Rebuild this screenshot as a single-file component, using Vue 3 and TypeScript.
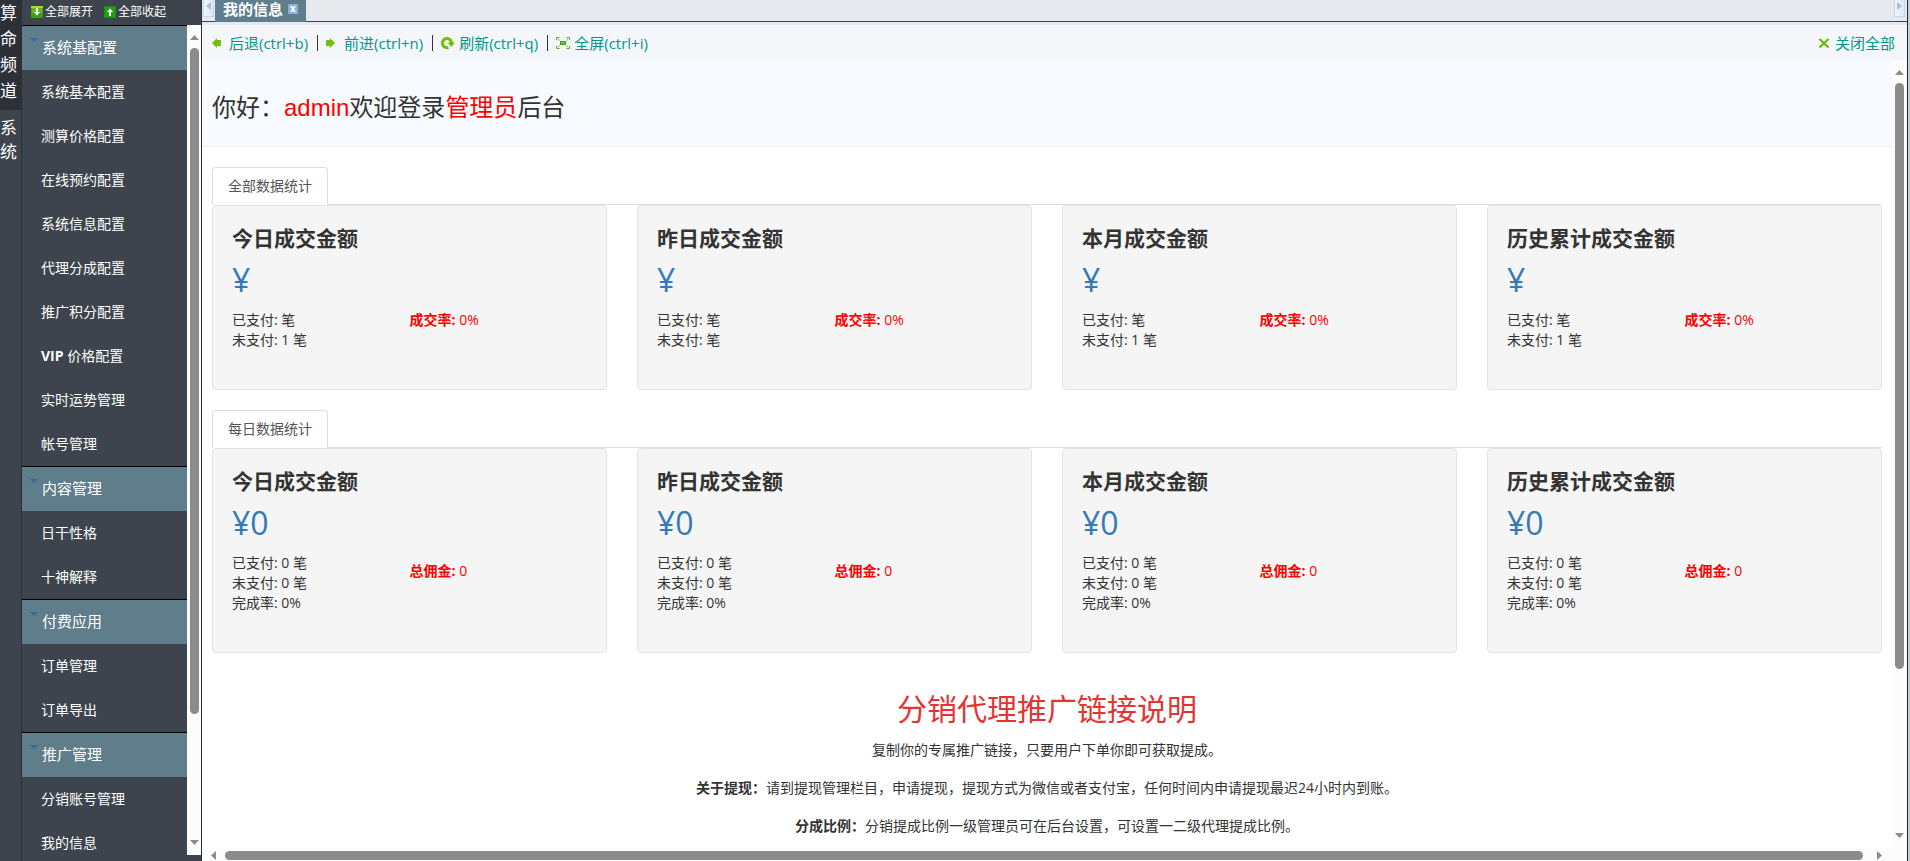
<script setup lang="ts">
import { ref } from 'vue'

interface Group {
  title: string
  items: string[]
  open: boolean
}
interface Stat {
  title: string
  amount: string
  lines: string[]
  label: string
  value: string
}

const channels = [
  { name: '算命频道', active: true },
  { name: '系统', active: false },
]

const groups = ref<Group[]>([
  {
    title: '系统基配置',
    items: ['系统基本配置', '测算价格配置', '在线预约配置', '系统信息配置', '代理分成配置', '推广积分配置', 'VIP 价格配置', '实时运势管理', '帐号管理'],
    open: true,
  },
  { title: '内容管理', items: ['日干性格', '十神解释'], open: true },
  { title: '付费应用', items: ['订单管理', '订单导出'], open: true },
  { title: '推广管理', items: ['分销账号管理', '我的信息'], open: true },
])

function setAll(open: boolean) {
  groups.value.forEach((g) => (g.open = open))
}

const names = ['今日成交金额', '昨日成交金额', '本月成交金额', '历史累计成交金额']
const unpaid = ['1 笔', '笔', '1 笔', '1 笔']

const sections: { tab: string; kind: string; cards: Stat[] }[] = [
  {
    tab: '全部数据统计',
    kind: 'total',
    cards: names.map((title, i) => ({
      title,
      amount: '¥',
      lines: ['已支付: 笔', `未支付: ${unpaid[i]}`],
      label: '成交率:',
      value: '0%',
    })),
  },
  {
    tab: '每日数据统计',
    kind: 'daily',
    cards: names.map((title) => ({
      title,
      amount: '¥0',
      lines: ['已支付: 0 笔', '未支付: 0 笔', '完成率: 0%'],
      label: '总佣金:',
      value: '0',
    })),
  },
]
</script>

<template>
  <div class="app">
    <nav class="rail">
      <a v-for="c in channels" :key="c.name" href="#" class="channel" :class="{ active: c.active }">{{ c.name }}</a>
    </nav>

    <aside class="side">
      <div class="side-tools">
        <button type="button" @click="setAll(true)">
          <svg width="12" height="12" viewBox="0 0 12 12"><rect width="12" height="12" rx="1" fill="#3f9f10" /><rect width="12" height="2" fill="#a4e02a" /><rect x="1" y="2" width="10" height="5" fill="#5cba1a" /><path d="M5 2h2v4h2L6 9.500 3 6h2z" fill="#fff" /></svg>
          全部展开
        </button>
        <button type="button" @click="setAll(false)">
          <svg width="12" height="12" viewBox="0 0 12 12"><rect width="12" height="12" rx="1" fill="#1d8a10" /><rect x="1" y="1" width="10" height="10" fill="#22a012" /><path d="M5 10h2V6h2L6 2.500 3 6h2z" fill="#fff" /></svg>
          全部收起
        </button>
      </div>
      <div class="side-body">
        <div class="menu">
          <section v-for="g in groups" :key="g.title" class="group">
            <button type="button" class="group-head" @click="g.open = !g.open">
              <svg width="8" height="4" viewBox="0 0 8 4"><path d="M0 0h8v1H7L4 4 1 1H0z" fill="#39689c" /></svg>
              <span>{{ g.title }}</span>
            </button>
            <template v-if="g.open">
              <a v-for="it in g.items" :key="it" href="#" class="item">
                <template v-if="it.startsWith('VIP')"><b>VIP</b>{{ it.slice(3) }}</template>
                <template v-else>{{ it }}</template>
              </a>
            </template>
          </section>
        </div>
        <div class="bar bar-v side-bar">
          <svg width="9" height="5" viewBox="0 0 9 5"><path d="M0 5 4.500 0 9 5z" fill="#8b8b8b" /></svg>
          <div class="track"><div class="thumb side-thumb"></div></div>
          <svg width="9" height="5" viewBox="0 0 9 5"><path d="M0 0h9L4.500 5z" fill="#8b8b8b" /></svg>
        </div>
      </div>
    </aside>

    <main class="main">
      <div class="tabs">
        <button type="button" class="scroller" aria-label="向左">
          <svg width="5" height="8" viewBox="0 0 5 8"><path d="M5 0v8L0 4z" fill="#a9bdd8" /></svg>
        </button>
        <div class="tab">
          <span>我的信息</span>
          <button type="button" class="tab-close" aria-label="关闭">
            <svg width="10" height="10" viewBox="0 0 10 10"><rect width="10" height="10" rx="1" fill="#8fb0da" /><path d="M2 2h2l1 1.500L6 2h2L6 5l2 3H6L5 6.500 4 8H2l2-3z" fill="#fff" /></svg>
          </button>
        </div>
        <button type="button" class="scroller last" aria-label="向右">
          <svg width="5" height="8" viewBox="0 0 5 8"><path d="M0 0v8l5-4z" fill="#a9bdd8" /></svg>
        </button>
      </div>

      <div class="toolbar">
        <a href="#">
          <svg width="16" height="16" viewBox="0 0 16 16"><path d="M1 8 6 3v2h4v6H6v2z" fill="#6fbf0c" /></svg>后退(ctrl+b)</a>
        <i></i>
        <a href="#">
          <svg width="16" height="16" viewBox="0 0 16 16"><path d="M9 8 4 3v2H0v6h4v2z" fill="#6fbf0c" /></svg>前进(ctrl+n)</a>
        <i></i>
        <a href="#">
          <svg width="16" height="16" viewBox="0 0 16 16"><path d="M7.500 12.500A4.600 4.600 0 1 1 10.600 8" fill="none" stroke="#6fbf0c" stroke-width="3" /><path d="M6.500 7.500H14L10.200 12z" fill="#6fbf0c" /></svg>刷新(ctrl+q)</a>
        <i></i>
        <a href="#">
          <svg width="16" height="16" viewBox="0 0 16 16"><path d="M.500 5V2.500h3M10.500 2.500h3V5M13.500 11v2.500h-3M3.500 13.500h-3V11" fill="none" stroke="#5cab2a" /><path d="m2 4 1.500 1.500M12 4l-1.500 1.500M2 12l1.500-1.500M12 12l-1.500-1.500" stroke="#8fcf5a" stroke-width="1.200" /><rect x="4.500" y="6.500" width="5" height="3" fill="#5fd22b" stroke="#3f9f10" /></svg>全屏(ctrl+i)</a>
        <a href="#" class="close-all">
          <svg width="16" height="16" viewBox="0 0 16 16"><path d="m2.500 4 9 8.500M11.500 4l-9 8.500" stroke="#6fb80c" stroke-width="2.400" /></svg>关闭全部</a>
      </div>

      <div class="view">
        <div class="view-row">
          <div class="content">
            <h1 class="hello">你好：<em>admin</em>欢迎登录<em>管理员</em>后台</h1>

            <section v-for="s in sections" :key="s.tab" class="stats" :class="s.kind">
              <div class="stat-tabs"><button type="button">{{ s.tab }}</button></div>
              <div class="cards">
                <article v-for="c in s.cards" :key="c.title" class="card">
                  <h2>{{ c.title }}</h2>
                  <p class="amount">{{ c.amount }}</p>
                  <div class="detail">
                    <div><p v-for="l in c.lines" :key="l">{{ l }}</p></div>
                    <p class="rate"><b>{{ c.label }}</b> {{ c.value }}</p>
                  </div>
                </article>
              </div>
            </section>

            <section class="promo">
              <h2>分销代理推广链接说明</h2>
              <p>复制你的专属推广链接，只要用户下单你即可获取提成。</p>
              <p><b>关于提现：</b>请到提现管理栏目，申请提现，提现方式为微信或者支付宝，任何时间内申请提现最迟24小时内到账。</p>
              <p><b>分成比例：</b>分销提成比例一级管理员可在后台设置，可设置一二级代理提成比例。</p>
            </section>
          </div>
          <div class="bar bar-v">
            <svg width="9" height="5" viewBox="0 0 9 5"><path d="M0 5 4.500 0 9 5z" fill="#8b8b8b" /></svg>
            <div class="track"><div class="thumb view-thumb"></div></div>
            <svg width="9" height="5" viewBox="0 0 9 5"><path d="M0 0h9L4.500 5z" fill="#8b8b8b" /></svg>
          </div>
        </div>
        <div class="bar bar-h">
          <svg width="5" height="9" viewBox="0 0 5 9"><path d="M5 0v9L0 4.500z" fill="#8b8b8b" /></svg>
          <div class="track"><div class="thumb"></div></div>
          <svg width="5" height="9" viewBox="0 0 5 9"><path d="M0 0v9l5-4.500z" fill="#8b8b8b" /></svg>
        </div>
      </div>
    </main>
  </div>
</template>

<style>
html,
body {
  margin: 0;
  overflow: hidden;
  background: #bcd5da;
}
</style>

<style scoped>
.app {
  display: flex;
  height: 100vh;
  box-sizing: border-box;
  padding-right: 2px;
  font: 14px/20px "Open Sans", "Noto Sans CJK SC", sans-serif;
  color: #333;
}
.app * {
  box-sizing: border-box;
}
a {
  text-decoration: none;
  color: inherit;
}
button {
  border: 0;
  padding: 0;
  margin: 0;
  background: none;
  font: inherit;
  color: inherit;
  cursor: pointer;
}
h1,
h2,
p {
  margin: 0;
}
svg {
  flex: none;
  display: block;
}

.rail {
  width: 22px;
  flex: none;
  background: #3d444d;
  border-right: 1px solid #2b3038;
}
.rail .channel {
  display: block;
  padding: 6px 3px 6px 0;
  font-size: 17px;
  line-height: 24px;
  color: #fff;
  word-break: break-all;
}
.rail .active {
  background: #2c3138;
  padding: 0 3px 6px 0;
  line-height: 26px;
}

.side {
  width: 180px;
  flex: none;
  display: flex;
  flex-direction: column;
  background: #3d444d;
  border-right: 1px solid #2b3038;
  color: #fff;
  padding-bottom: 6px;
}
.side-tools {
  flex: none;
  height: 25px;
  display: flex;
  align-items: center;
  gap: 11px;
  padding: 0 9px 2px;
  font-size: 12px;
}
.side-tools button {
  display: flex;
  align-items: center;
  gap: 2px;
}
.side-body {
  flex: 1;
  min-height: 0;
  display: flex;
}
.menu {
  flex: 1;
  overflow: hidden;
}
.group {
  border-top: 1px solid #000;
}
.group-head {
  width: 100%;
  height: 44px;
  display: flex;
  align-items: center;
  gap: 4px;
  padding: 0 0 2px 8px;
  background: #607d8b;
  font-size: 15px;
}
.group-head svg {
  align-self: flex-start;
  margin-top: 12px;
}
.item {
  display: block;
  height: 44px;
  line-height: 44px;
  padding-left: 19px;
}

.bar {
  flex: none;
  display: flex;
  align-items: center;
  background: #fcfcfc;
}
.bar-v {
  width: 15px;
  flex-direction: column;
  padding: 10px 0;
  gap: 8px;
}
.side-bar {
  width: 14px;
}
.bar-h {
  height: 13px;
  padding: 2px 25px 0 9px;
  gap: 9px;
}
.track {
  flex: 1;
  min-height: 0;
}
.bar-h .track {
  padding-right: 5px;
}
.thumb {
  width: 9px;
  border-radius: 5px;
  background: #8b8b8b;
}
.side-thumb {
  height: 85%;
}
.view-thumb {
  height: 79%;
}
.bar-h .thumb {
  width: 100%;
  height: 9px;
}

.main {
  flex: 1;
  min-width: 0;
  display: flex;
  flex-direction: column;
  border-right: 1px solid #20282c;
  background: #fff;
}
.tabs {
  flex: none;
  height: 22px;
  display: flex;
  align-items: flex-start;
  padding: 0 2px 0 1px;
  background: #e6e9ee;
  border-bottom: 1px solid #3d444d;
}
.scroller {
  width: 11px;
  height: 17px;
  display: flex;
  justify-content: center;
  padding-top: 2px;
  border: 1px solid #c5d7ec;
  border-top: 0;
  background: linear-gradient(90deg, #eef5fc, #dce9f7);
}
.scroller.last {
  margin-left: auto;
}
.tab {
  height: 22px;
  display: flex;
  align-items: center;
  gap: 5px;
  margin-left: 1px;
  padding: 0 8px 5px;
  background: #607d8b;
  color: #fff;
  font-size: 15px;
  font-weight: bold;
}
.toolbar {
  flex: none;
  height: 38px;
  display: flex;
  align-items: center;
  padding: 0 12px 0 9px;
  border-top: 3px solid #e6e9ee;
  background: #f5f6fa;
  color: #009688;
  font-size: 15px;
}
.toolbar a {
  display: flex;
  align-items: center;
  gap: 2px;
}
.toolbar i {
  width: 1px;
  height: 16px;
  margin: 0 8px 0 9px;
  background: #333;
}
.toolbar .close-all {
  margin-left: auto;
}

.view {
  flex: 1;
  min-height: 0;
  display: flex;
  flex-direction: column;
}
.view-row {
  flex: 1;
  min-height: 0;
  display: flex;
}
.content {
  flex: 1;
  min-width: 0;
  overflow: hidden;
}
.hello {
  height: 87px;
  padding: 0 10px;
  background: #f7fbff;
  border-bottom: 1px solid #ebeff2;
  font: 24px/96px "Liberation Sans", "Noto Sans CJK SC", sans-serif;
}
.hello em {
  font-style: normal;
  color: #f00;
}
.stats {
  padding: 20px 10px 0;
}
.stat-tabs {
  display: flex;
  height: 38px;
  border-bottom: 1px solid #ddd;
}
.stat-tabs button {
  height: 38px;
  padding: 0 15px 2px;
  border: 1px solid #ddd;
  border-bottom: 0;
  border-radius: 4px 4px 0 0;
  background: #fff;
  color: #555;
}
.cards {
  display: grid;
  grid-template-columns: repeat(4, 1fr);
  gap: 30px;
}
.card {
  min-height: 185px;
  padding: 19px;
  border: 1px solid #e3e3e3;
  border-radius: 4px;
  background: #f5f5f5;
}
.daily .card {
  min-height: 205px;
}
.card h2 {
  font-size: 21px;
  line-height: 26px;
}
.amount {
  margin: 13px 0 14px;
  font-size: 32px;
  line-height: 32px;
  color: #337ab7;
}
.detail {
  display: grid;
  grid-template-columns: 1fr 1fr;
}
.rate {
  color: #f00;
}
.daily .rate {
  padding-top: 8px;
}
.promo {
  padding-top: 36px;
  text-align: center;
}
.promo h2 {
  margin-bottom: 11px;
  font-size: 30px;
  font-weight: normal;
  line-height: 40px;
  color: #e53333;
}
.promo p {
  margin-bottom: 18px;
}
</style>
